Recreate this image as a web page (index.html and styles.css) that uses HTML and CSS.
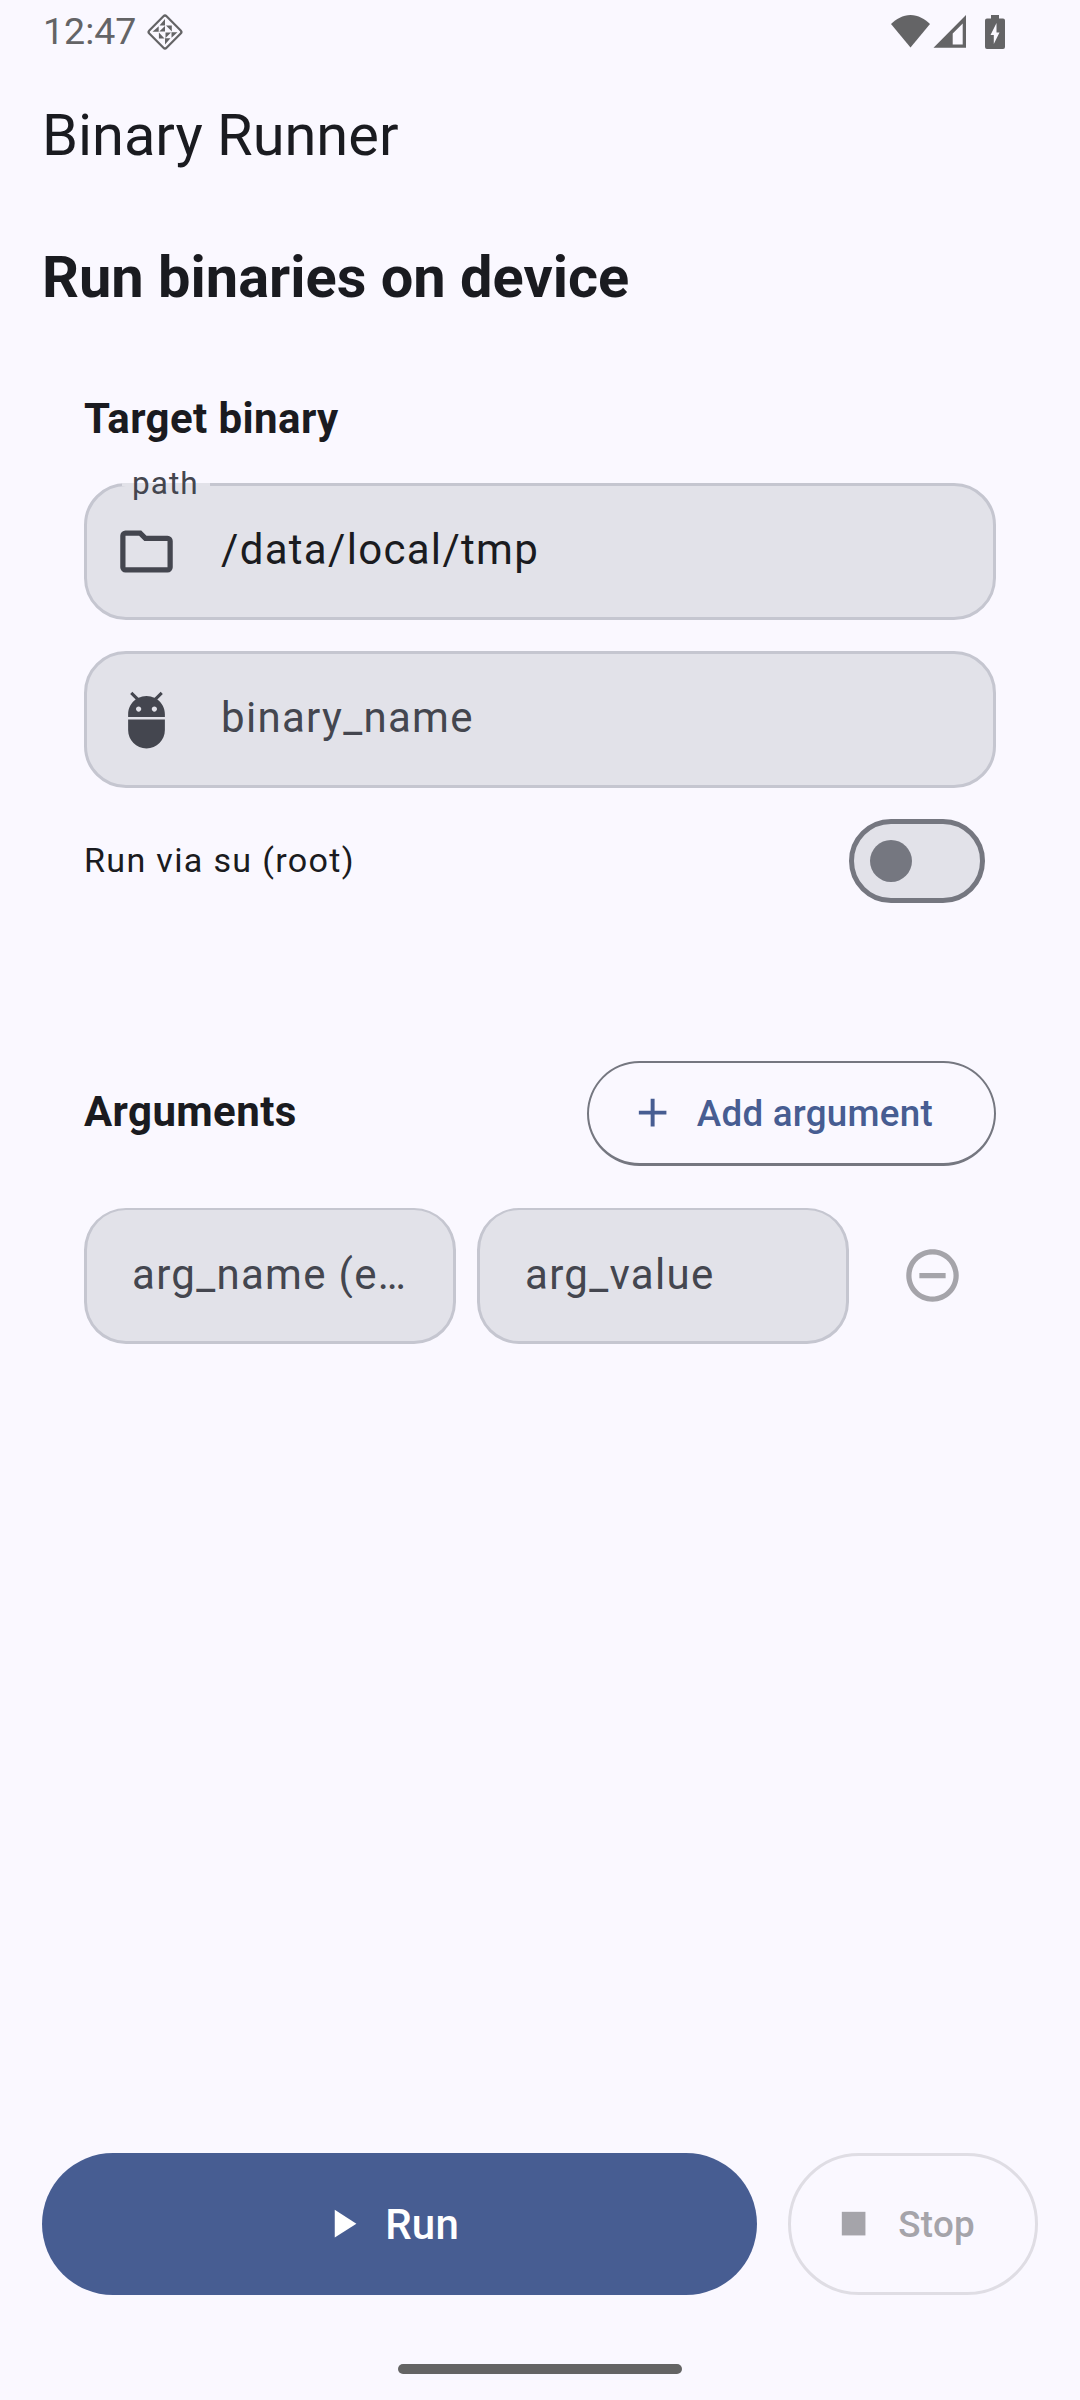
FILE: index.html
```html
<!DOCTYPE html>
<html lang="en">
<head>
<meta charset="utf-8">
<title>Binary Runner</title>
<link rel="stylesheet" href="styles.css">
</head>
<body>
<div class="screen">
  <header class="status-bar">
    <span class="clock">12:47</span>
    <svg class="debug-icon" viewBox="0 0 38 38">
      <rect x="6.8" y="6.8" width="24.4" height="24.4" rx="2.2" transform="rotate(45 19 19)" fill="none" stroke="currentColor" stroke-width="2.2"/>
      <path fill="currentColor" d="M19 6v6.500h-5.500zM6.500 18.800l6.200-5.500v5.500zM19 31.500v-6.200h5.500zM31.500 19.300l-6 5.500v-5.500zM20 12.500h5.800v6zM18.500 25.500h-5.600v-6zM13.300 18.500l5.700-5.500v5.500zM25 19.600l-5.500 5.400v-5.400z"/>
    </svg>
    <svg class="system-icons" viewBox="0 0 116 38">
      <g fill="currentColor">
        <path d="M20.500 34.500L1 11C6 6 13 2 20.500 2S35 6 40 11z"/>
        <path fill-rule="evenodd" d="M43.500 34.700L76 2v32.700zM62.700 31.600H72.700V10.500L62.700 20.500z"/>
        <path fill-rule="evenodd" d="M101 2h8v3.500h4q2 0 2 2V34q0 2-2 2H97q-2 0-2-2V7.500q0-2 2-2h4zM106.500 10L100.500 22h3.300v9l5.700-11.500h-3z"/>
      </g>
    </svg>
  </header>

  <h1 class="app-title">Binary Runner</h1>
  <h2 class="page-title">Run binaries on device</h2>

  <main class="content">
    <section class="target">
      <h3 class="section-title">Target binary</h3>
      <div class="field">
        <span class="field-label">path</span>
        <svg class="icon" viewBox="0 0 24 24"><path d="M4 20q-.82 0-1.410-.59Q2 18.820 2 18V6q0-.82.59-1.410Q3.180 4 4 4h6l2 2h8q.82 0 1.410.59.59.59.59 1.410v10q0 .82-.59 1.410-.59.59-1.410.59zM4 18h16V8h-8.830l-2-2H4z" fill="currentColor"/></svg>
        <span class="field-text filled">/data/local/tmp</span>
      </div>
      <div class="field">
        <svg class="icon" viewBox="0 0 24 24"><path fill="currentColor" d="M5 16c0 3.870 3.130 7 7 7s7-3.130 7-7v-4H5v4zM16.120 4.370l2.100-2.100-.82-.83-2.300 2.310C14.160 3.280 13.120 3 12 3s-2.160.28-3.090.75L6.600 1.440l-.82.83 2.100 2.100C6.140 5.640 5 7.680 5 10v1h14v-1c0-2.320-1.140-4.360-2.880-5.630zM9 9c-.55 0-1-.45-1-1s.45-1 1-1 1 .45 1 1-.45 1-1 1zm6 0c-.55 0-1-.45-1-1s.45-1 1-1 1 .45 1 1-.45 1-1 1z"/></svg>
        <span class="field-text">binary_name</span>
      </div>
      <div class="switch-row">
        <span class="switch-label">Run via su (root)</span>
        <span class="switch"><span class="knob"></span></span>
      </div>
    </section>

    <section class="arguments">
      <div class="arguments-head">
        <h3 class="section-title">Arguments</h3>
        <button class="button outlined">
          <svg class="button-icon" viewBox="0 0 24 24"><path fill="currentColor" d="M19 13h-6v6h-2v-6H5v-2h6V5h2v6h6z"/></svg>
          <span>Add argument</span>
        </button>
      </div>
      <div class="argument-row">
        <div class="field compact"><span class="field-text">arg_name (e…</span></div>
        <div class="field compact"><span class="field-text">arg_value</span></div>
        <svg class="icon remove" viewBox="0 0 24 24"><path fill="currentColor" d="M7 11v2h10v-2zM12 2C6.480 2 2 6.480 2 12s4.480 10 10 10 10-4.480 10-10S17.520 2 12 2zm0 18c-4.410 0-8-3.590-8-8s3.590-8 8-8 8 3.590 8 8-3.590 8-8 8z"/></svg>
      </div>
    </section>
  </main>

  <footer class="actions">
    <button class="button primary">
      <svg class="button-icon" viewBox="0 0 24 24"><path fill="currentColor" d="M8 5v14l11-7z"/></svg>
      <span>Run</span>
    </button>
    <button class="button outlined disabled">
      <svg class="button-icon" viewBox="0 0 24 24"><path fill="currentColor" d="M6 6h12v12H6z"/></svg>
      <span>Stop</span>
    </button>
  </footer>
  <div class="home-indicator"></div>
</div>
</body>
</html>
```

FILE: styles.css
```css
* { box-sizing: border-box; }

body {
  margin: 0;
  background: #faf8ff;
  color: #1a1b20;
  font-family: Roboto, "Liberation Sans", sans-serif;
}

h1, h2, h3 { margin: 0; }

.screen {
  width: 1080px;
  height: 2400px;
  display: flex;
  flex-direction: column;
  overflow: hidden;
}

.status-bar {
  height: 63px;
  padding: 0 74px 0 43px;
  display: flex;
  align-items: center;
  color: #646466;
  flex: none;
}

.clock {
  width: 103px;
  font-size: 37.5px;
  line-height: 63px;
}

.debug-icon { width: 38px; height: 38px; }

.system-icons {
  width: 116px;
  height: 38px;
  margin-left: auto;
}

.app-title {
  padding-left: 42px;
  height: 144px;
  line-height: 144px;
  font-size: 57.75px;
  font-weight: 400;
}

.page-title {
  padding-left: 42px;
  margin-top: 33px;
  height: 74px;
  line-height: 74px;
  font-size: 57.75px;
  font-weight: 700;
}

.content { padding: 73px 84px 0; }

.section-title {
  font-size: 42px;
  line-height: 63px;
  font-weight: 700;
  letter-spacing: 0.4px;
}

.target .section-title { margin-bottom: 33px; }

.field {
  position: relative;
  height: 137px;
  padding: 0 44px 4px 28px;
  border: 3px solid #c5c6d0;
  border-radius: 42px;
  background: #e2e2e9;
  color: #44464f;
  display: flex;
  align-items: center;
  gap: 43px;
}

.field + .field { margin-top: 31px; }

.icon {
  width: 63px;
  height: 63px;
  flex: none;
}

.field .icon { margin-top: 4px; }

.field-label {
  position: absolute;
  left: 35px;
  top: -3px;
  height: 3px;
  padding: 0 11px 0 10px;
  background: #e2e2e9;
  font-size: 31.5px;
  line-height: 1px;
  letter-spacing: 1.05px;
}

.field-text {
  font-size: 42px;
  line-height: 63px;
  letter-spacing: 1.31px;
  white-space: nowrap;
}

.filled { color: #1a1b20; }

.switch-row {
  margin-top: 31px;
  height: 84px;
  padding-right: 11px;
  display: flex;
  align-items: center;
  justify-content: space-between;
}

.switch-label {
  margin-bottom: 2px;
  font-size: 34.125px;
  letter-spacing: 1.31px;
}

.switch {
  width: 136px;
  height: 84px;
  padding-left: 16px;
  border: 5px solid #757780;
  border-radius: 42px;
  background: #e2e2e9;
  display: flex;
  align-items: center;
}

.knob {
  width: 42px;
  height: 42px;
  border-radius: 50%;
  background: #757780;
}

.arguments { margin-top: 158px; }

.arguments-head {
  height: 105px;
  display: flex;
  align-items: center;
  justify-content: space-between;
}

.arguments-head .section-title { margin-bottom: 4px; }

.button {
  height: 105px;
  margin: 0;
  padding: 0 61px 0 40px;
  border: 2px solid #757780;
  border-bottom-width: 3px;
  border-radius: 71px;
  background: transparent;
  color: #475d92;
  font-family: inherit;
  font-size: 36.75px;
  font-weight: 500;
  letter-spacing: 0.26px;
  white-space: nowrap;
  display: flex;
  align-items: center;
  justify-content: center;
  gap: 21px;
}

.button-icon {
  width: 47.25px;
  height: 47.25px;
  flex: none;
}

.argument-row {
  margin-top: 42px;
  display: flex;
  align-items: center;
}

.compact {
  width: 372px;
  height: 136px;
  padding: 0 44px 1px 45px;
  border-width: 2px 3px 3px;
}

.compact .field-text {
  overflow: hidden;
  line-height: 46px;
}

.argument-row .compact + .compact { margin: 0 0 0 21px; }

.remove {
  margin: 0 0 2px 52px;
  color: #a5a4aa;
}

.actions {
  margin-top: auto;
  padding: 0 42px;
  display: flex;
  gap: 31px;
}

.actions .button { height: 142px; }

.actions .primary {
  flex: 1;
  gap: 19px;
  border: 0;
  padding: 0 63px 0 42px;
  background: #475d92;
  color: #fff;
  font-size: 42px;
}

.actions .disabled {
  width: 250px;
  padding: 0 60px 0 39px;
  border: 3px solid #dfdde4;
  color: #a5a4aa;
}

.home-indicator {
  width: 284px;
  height: 10px;
  margin: 69px auto 26px;
  border-radius: 5px;
  background: #646464;
  flex: none;
}
```
